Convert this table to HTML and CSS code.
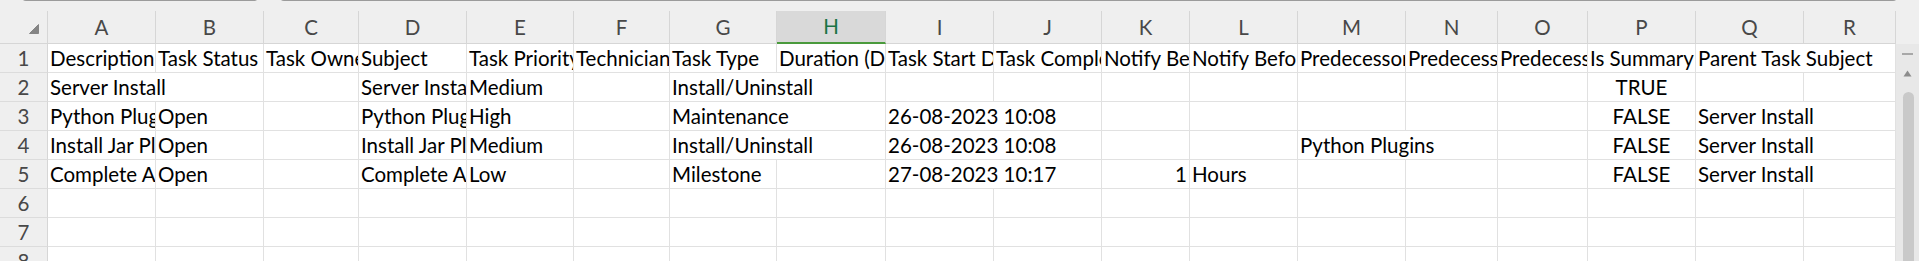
FILE: index.html
```html
<!DOCTYPE html>
<html lang="en">
  <head>
    <meta charset="UTF-8" />
    <meta name="viewport" content="width=device-width, initial-scale=1.0" />
    <title>Tasks</title>
    <link rel="stylesheet" href="styles.css">
  </head>
  <body>
    <div class="sheet">
      <div class="topbar">
        <div class="namebox"></div>
        <div class="formula"></div>
      </div>

      <div class="main">
        <div class="grid">
          <!-- column letters -->
          <div class="hd corner">
            <svg width="10" height="10" viewBox="0 0 10 10"><path d="M9.5 0.5 L9.5 9.5 L0.5 9.5 Z" fill="#858585" stroke="#858585" stroke-linejoin="round"/></svg>
          </div>
          <div class="hd">A</div>
          <div class="hd">B</div>
          <div class="hd">C</div>
          <div class="hd">D</div>
          <div class="hd">E</div>
          <div class="hd">F</div>
          <div class="hd">G</div>
          <div class="hd sel">H</div>
          <div class="hd">I</div>
          <div class="hd">J</div>
          <div class="hd">K</div>
          <div class="hd">L</div>
          <div class="hd">M</div>
          <div class="hd">N</div>
          <div class="hd">O</div>
          <div class="hd">P</div>
          <div class="hd">Q</div>
          <div class="hd">R</div>

          <!-- row 1 -->
          <div class="rh">1</div>
          <div class="c">Description</div>
          <div class="c">Task Status</div>
          <div class="c">Task Owner</div>
          <div class="c">Subject</div>
          <div class="c">Task Priority</div>
          <div class="c">Technician</div>
          <div class="c">Task Type</div>
          <div class="c">Duration (Days)</div>
          <div class="c">Task Start Date</div>
          <div class="c">Task Completion Date</div>
          <div class="c">Notify Before</div>
          <div class="c">Notify Before Unit</div>
          <div class="c">Predecessors</div>
          <div class="c">Predecessor Type</div>
          <div class="c">Predecessor Lag</div>
          <div class="c">Is Summary Task</div>
          <div class="c span2">Parent Task Subject</div>

          <!-- row 2 -->
          <div class="rh">2</div>
          <div class="c span2">Server Install</div>
          <div class="c"></div>
          <div class="c">Server Install</div>
          <div class="c">Medium</div>
          <div class="c"></div>
          <div class="c span2">Install/Uninstall</div>
          <div class="c"></div>
          <div class="c"></div>
          <div class="c"></div>
          <div class="c"></div>
          <div class="c"></div>
          <div class="c"></div>
          <div class="c"></div>
          <div class="c bool">TRUE</div>
          <div class="c"></div>
          <div class="c"></div>

          <!-- row 3 -->
          <div class="rh">3</div>
          <div class="c">Python Plugins</div>
          <div class="c">Open</div>
          <div class="c"></div>
          <div class="c">Python Plugins</div>
          <div class="c">High</div>
          <div class="c"></div>
          <div class="c span2">Maintenance</div>
          <div class="c span2">26-08-2023 10:08</div>
          <div class="c"></div>
          <div class="c"></div>
          <div class="c"></div>
          <div class="c"></div>
          <div class="c"></div>
          <div class="c bool">FALSE</div>
          <div class="c span2">Server Install</div>

          <!-- row 4 -->
          <div class="rh">4</div>
          <div class="c">Install Jar Plugins</div>
          <div class="c">Open</div>
          <div class="c"></div>
          <div class="c">Install Jar Plugins</div>
          <div class="c">Medium</div>
          <div class="c"></div>
          <div class="c span2">Install/Uninstall</div>
          <div class="c span2">26-08-2023 10:08</div>
          <div class="c"></div>
          <div class="c"></div>
          <div class="c span2">Python Plugins</div>
          <div class="c"></div>
          <div class="c bool">FALSE</div>
          <div class="c span2">Server Install</div>

          <!-- row 5 -->
          <div class="rh">5</div>
          <div class="c">Complete Activation</div>
          <div class="c">Open</div>
          <div class="c"></div>
          <div class="c">Complete Activation</div>
          <div class="c">Low</div>
          <div class="c"></div>
          <div class="c">Milestone</div>
          <div class="c"></div>
          <div class="c span2">27-08-2023 10:17</div>
          <div class="c num">1</div>
          <div class="c">Hours</div>
          <div class="c"></div>
          <div class="c"></div>
          <div class="c"></div>
          <div class="c bool">FALSE</div>
          <div class="c span2">Server Install</div>

          <!-- empty rows -->
          <div class="rh">6</div>
          <div class="c"></div><div class="c"></div><div class="c"></div><div class="c"></div><div class="c"></div><div class="c"></div>
          <div class="c"></div><div class="c"></div><div class="c"></div><div class="c"></div><div class="c"></div><div class="c"></div>
          <div class="c"></div><div class="c"></div><div class="c"></div><div class="c"></div><div class="c"></div><div class="c"></div>

          <div class="rh">7</div>
          <div class="c"></div><div class="c"></div><div class="c"></div><div class="c"></div><div class="c"></div><div class="c"></div>
          <div class="c"></div><div class="c"></div><div class="c"></div><div class="c"></div><div class="c"></div><div class="c"></div>
          <div class="c"></div><div class="c"></div><div class="c"></div><div class="c"></div><div class="c"></div><div class="c"></div>

          <div class="rh">8</div>
          <div class="c"></div><div class="c"></div><div class="c"></div><div class="c"></div><div class="c"></div><div class="c"></div>
          <div class="c"></div><div class="c"></div><div class="c"></div><div class="c"></div><div class="c"></div><div class="c"></div>
          <div class="c"></div><div class="c"></div><div class="c"></div><div class="c"></div><div class="c"></div><div class="c"></div>
        </div>

        <div class="vscroll">
          <div class="cap"></div>
          <div class="track">
            <div class="dash"></div>
            <svg class="arrow" width="9" height="7" viewBox="0 0 9 7"><path d="M4.5 0.5 L8.5 6.5 L0.5 6.5 Z" fill="#8c8c8c"/></svg>
            <div class="thumb"></div>
          </div>
        </div>
      </div>
    </div>
  </body>
</html>
```

FILE: styles.css
```css
* {
  box-sizing: border-box;
}
body {
  margin: 0;
  overflow: hidden;
  background-color: #ffffff;
  font-family: Lato, "Noto Sans", sans-serif;
  font-size: 20.5px;
  color: #000000;
}
.sheet {
  display: flex;
  flex-direction: column;
  height: 261px;
  background-color: #efefef;
}

/* bottoms of the name box and formula bar */
.topbar {
  display: flex;
  height: 11px;
  flex-shrink: 0;
}
.namebox,
.formula {
  height: 5px;
  margin-top: -4px;
  border: 1px solid #9b9b9b;
  border-top: 0;
  border-radius: 0 0 4px 4px;
}
.namebox {
  width: 236px;
  margin-left: 22px;
}
.formula {
  flex: 1;
  margin-left: 22px;
  margin-right: 22px;
}

.main {
  display: flex;
  flex: 1;
  overflow: hidden;
}
.grid {
  display: grid;
  grid-template-columns: 48px 108px 108px 95px 108px 107px 96px 107px 109px 108px 108px 88px 108px 108px 92px 90px 108px 108px 92px;
  grid-template-rows: 33px;
  grid-auto-rows: 29px;
  align-content: start;
  width: 1896px;
  flex-shrink: 0;
  background-color: #ffffff;
}

.hd {
  background-color: #efefef;
  border-right: 1px solid #d6d6d6;
  border-bottom: 1px solid #d6d6d6;
  color: #484848;
  text-align: center;
  line-height: 32px;
}
.hd.sel {
  background-color: #d9d9d9;
  color: #1b7446;
  border-bottom: 2px solid #4a9a3c;
  line-height: 31px;
}
.corner {
  padding: 13px 0 0 21px;
  line-height: 0;
}

.rh {
  background-color: #efefef;
  border-right: 1px solid #d6d6d6;
  border-bottom: 1px solid #dcdcdc;
  color: #484848;
  text-align: center;
  line-height: 28px;
}

.c {
  border-right: 1px solid #e1e1e1;
  border-bottom: 1px solid #e1e1e1;
  padding: 0 2px;
  line-height: 28px;
  white-space: nowrap;
  overflow: hidden;
}
.span2 {
  grid-column: span 2;
}
.num {
  text-align: right;
}
.bool {
  text-align: center;
}

/* vertical scroll bar */
.vscroll {
  display: flex;
  flex-direction: column;
  width: 23px;
}
.cap {
  height: 33px;
  flex-shrink: 0;
}
.track {
  display: flex;
  flex-direction: column;
  flex: 1;
  padding-top: 9px;
  background-color: #e8e8e8;
}
.dash {
  width: 11px;
  height: 2px;
  margin-left: 6px;
  background-color: #a8a8a8;
}
.arrow {
  display: block;
  margin: 15px 0 0 7px;
}
.thumb {
  flex: 1;
  width: 11px;
  margin: 15px 0 0 7px;
  border-radius: 6px 6px 0 0;
  background-color: #c9c9c9;
}
```
